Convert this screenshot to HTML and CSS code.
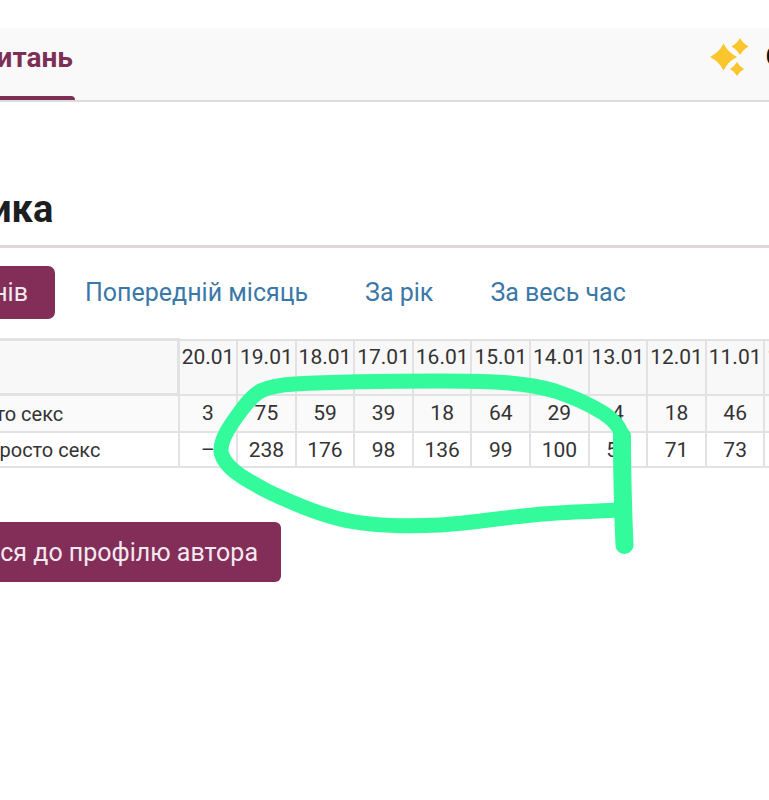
FILE: index.html
```html
<!DOCTYPE html>
<html lang="uk">
<head>
    <meta charset="UTF-8">
    <meta name="viewport" content="width=device-width, initial-scale=1.0">
    <title>Статистика</title>
    <link rel="stylesheet" href="styles.css">
</head>
<body>
    <div class="page">
        <header class="topbar">
            <a class="topbar-tab"><span class="topbar-tab-text">итань</span></a>
            <div class="topbar-right">
                <svg class="sparkles" width="40" height="40" viewBox="0 0 40 40">
                    <path d="M13.5 5.5 Q18 14.5 27 19 Q18 23.5 13.5 32.5 Q9 23.5 0 19 Q9 14.5 13.5 5.5 Z"/>
                    <path d="M30 0 Q33 5.5 38.5 8.5 Q33 11.5 30 17 Q27 11.5 21.5 8.5 Q27 5.5 30 0 Z"/>
                    <path d="M27 24 Q29.5 28.5 34 31 Q29.5 33.5 27 38 Q24.5 33.5 20 31 Q24.5 28.5 27 24 Z"/>
                </svg>
                <span class="topbar-user">С</span>
            </div>
        </header>

        <h1 class="title">ика</h1>

        <nav class="periods">
            <a class="period period-active">нів</a>
            <a class="period">Попередній місяць</a>
            <a class="period">За рік</a>
            <a class="period">За весь час</a>
        </nav>

        <table class="stats">
            <thead>
                <tr>
                    <th></th>
                    <th>20.01</th><th>19.01</th><th>18.01</th><th>17.01</th><th>16.01</th><th>15.01</th>
                    <th>14.01</th><th>13.01</th><th>12.01</th><th>11.01</th><th>10.01</th>
                </tr>
            </thead>
            <tbody>
                <tr>
                    <td class="label label-short">то секс</td>
                    <td>3</td><td>75</td><td>59</td><td>39</td><td>18</td><td>64</td>
                    <td>29</td><td>4</td><td>18</td><td>46</td><td></td>
                </tr>
                <tr>
                    <td class="label">росто секс</td>
                    <td>–</td><td>238</td><td>176</td><td>98</td><td>136</td><td>99</td>
                    <td>100</td><td>54</td><td>71</td><td>73</td><td></td>
                </tr>
            </tbody>
        </table>

        <a class="back-btn">ся до профілю автора</a>

        <!-- hand drawn marker over the screenshot -->
        <svg class="marker" width="769" height="800" viewBox="0 0 769 800">
            <path d="M622 438 C621 426 612 418 600 411 C585 402 570 396 555 391 C520 381 480 381 440 381 C380 381 330 382 295 384 C262 386 255 392 243 408 C232 423 220 438 221 452 C224 468 245 479 267 491 C290 502 315 513 340 519 C365 525 400 527 440 525 C470 523 500 518 533 515 C560 512 590 512 616 510"/>
            <path class="marker-tail" d="M622 436 C622 470 623 510 624.5 545"/>
        </svg>
    </div>
</body>
</html>
```

FILE: styles.css
```css
body {
    margin: 0;
    font-family: Roboto, "Noto Sans", sans-serif;
    background: #fff;
    color: #333;
}
.page {
    position: relative;
    width: 769px;
    height: 800px;
    overflow: hidden;
    padding-top: 28px;
    box-sizing: border-box;
}
.topbar {
    height: 74px;
    box-sizing: border-box;
    display: flex;
    justify-content: space-between;
    background: #f9f9fa;
    border-bottom: 2px solid #dcdcdc;
}
.topbar-tab {
    width: 75px;
    height: 72px;
    display: flex;
    flex-direction: column;
    align-items: flex-end;
    font-size: 28px;
    font-weight: 700;
    line-height: 32px;
    color: #7e2f56;
}
.topbar-tab-text {
    margin-top: 14px;
    padding-right: 2px;
}
.topbar-tab::after {
    content: "";
    align-self: stretch;
    height: 4px;
    margin-top: auto;
    background: #7e2f56;
    border-top-right-radius: 4px;
}
.topbar-right {
    display: flex;
    gap: 16px;
    padding-top: 10px;
    margin-right: -15px;
}
.sparkles {
    flex-shrink: 0;
    fill: #fbc52d;
}
.topbar-user {
    font-size: 28px;
    font-weight: 700;
    line-height: 38px;
    color: #111;
}
.title {
    margin: 82px 0 0 -10px;
    font-size: 38px;
    line-height: 50px;
    font-weight: 700;
    color: #1c1e21;
}
.periods {
    display: flex;
    align-items: center;
    height: 53px;
    margin-top: 11px;
    border-top: 3px solid #e0d6da;
    padding-top: 18px;
}
.period {
    font-size: 25px;
    color: #3a78a8;
    margin-right: 57px;
    white-space: nowrap;
}
.period-active {
    display: flex;
    align-items: center;
    justify-content: flex-end;
    flex-shrink: 0;
    height: 53px;
    width: 55px;
    margin-right: 30px;
    box-sizing: border-box;
    padding-right: 27px;
    color: #f3e9ee;
    background: #832e59;
    border-radius: 0 7px 7px 0;
}
.stats {
    margin: 19px 0 0 -3px;
    table-layout: fixed;
    width: 825px;
    border-collapse: collapse;
    font-size: 21px;
    color: #333;
}
.stats th, .stats td {
    border: 2px solid #e2e2e2;
    padding: 0;
    text-align: center;
    width: 58.6px;
    overflow: hidden;
    white-space: nowrap;
}
.stats th {
    height: 55px;
    vertical-align: top;
    padding-top: 4px;
    box-sizing: border-box;
    font-weight: 400;
    background: #f8f8f8;
}
.stats th:first-child {
    width: 180px;
    border-width: 3px;
}
.stats td {
    height: 35px;
}
.stats tbody tr:first-child td {
    background: #fafafa;
}
.stats tbody tr:last-child td {
    height: 33px;
}
.stats .label {
    text-align: left;
    font-size: 20px;
}
.stats .label-short {
    text-indent: -4px;
}
.back-btn {
    display: flex;
    align-items: center;
    justify-content: flex-end;
    width: 281px;
    height: 60px;
    box-sizing: border-box;
    margin-top: 54px;
    padding-right: 23px;
    font-size: 25px;
    white-space: nowrap;
    color: #f3e9ee;
    background: #832e59;
    border-radius: 0 6px 6px 0;
}
.marker {
    position: absolute;
    left: 0;
    top: 0;
    fill: none;
    stroke: #33fa9a;
    stroke-width: 15;
    stroke-linecap: round;
    stroke-linejoin: round;
}
.marker .marker-tail {
    stroke-width: 18;
}
```
